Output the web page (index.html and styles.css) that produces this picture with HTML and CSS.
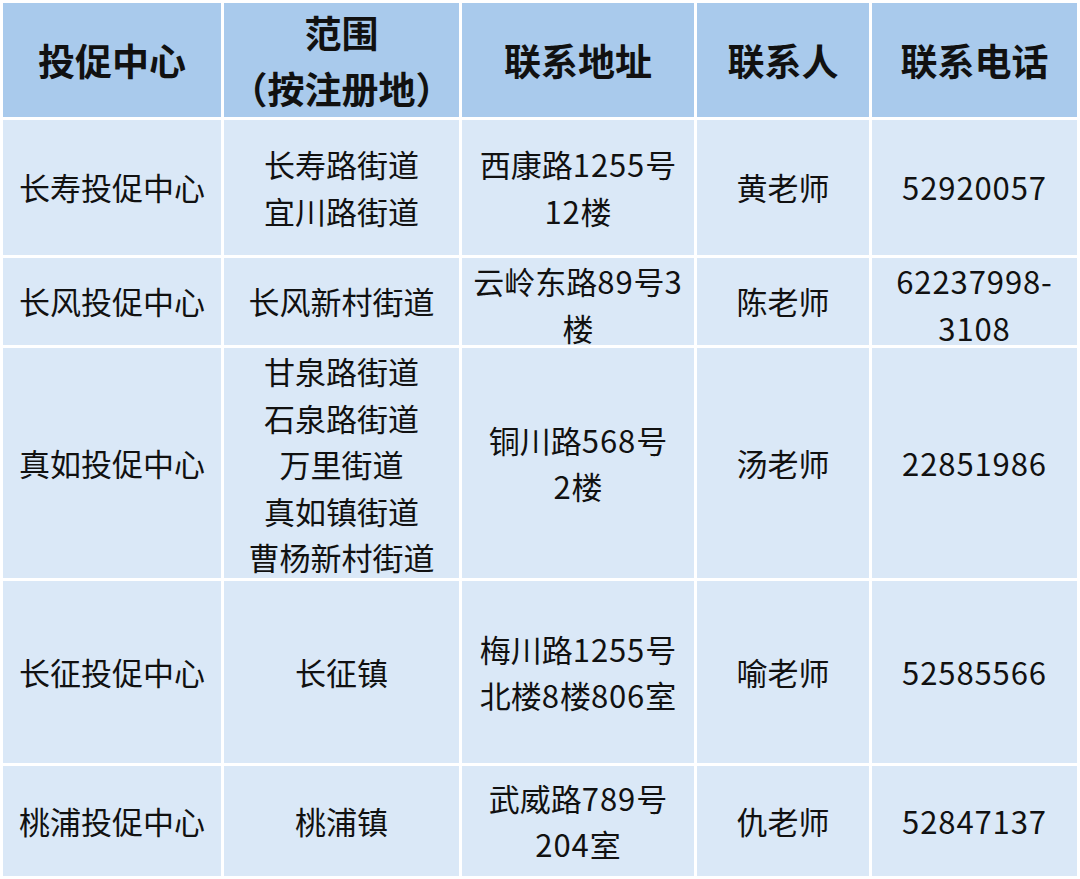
FILE: index.html
```html
<!DOCTYPE html>
<html lang="zh-CN">
<head>
<meta charset="utf-8">
<title>投促中心联系表</title>
<link rel="stylesheet" href="styles.css">
</head>
<body>
<div class="table">
  <div class="cell head"><div class="txt">投促中心</div></div>
  <div class="cell head"><div class="txt">范围<br>（按注册地）</div></div>
  <div class="cell head"><div class="txt">联系地址</div></div>
  <div class="cell head"><div class="txt">联系人</div></div>
  <div class="cell head"><div class="txt">联系电话</div></div>

  <div class="cell"><div class="txt">长寿投促中心</div></div>
  <div class="cell"><div class="txt">长寿路街道<br>宜川路街道</div></div>
  <div class="cell"><div class="txt">西康路<span class="num">1255</span>号<br><span class="num">12</span>楼</div></div>
  <div class="cell"><div class="txt">黄老师</div></div>
  <div class="cell"><div class="txt"><span class="num">52920057</span></div></div>

  <div class="cell"><div class="txt">长风投促中心</div></div>
  <div class="cell"><div class="txt">长风新村街道</div></div>
  <div class="cell"><div class="txt">云岭东路<span class="num">89</span>号<span class="num">3</span><br>楼</div></div>
  <div class="cell"><div class="txt">陈老师</div></div>
  <div class="cell"><div class="txt"><span class="num">62237998-</span><br><span class="num">3108</span></div></div>

  <div class="cell"><div class="txt">真如投促中心</div></div>
  <div class="cell"><div class="txt">甘泉路街道<br>石泉路街道<br>万里街道<br>真如镇街道<br>曹杨新村街道</div></div>
  <div class="cell"><div class="txt">铜川路<span class="num">568</span>号<br><span class="num">2</span>楼</div></div>
  <div class="cell"><div class="txt">汤老师</div></div>
  <div class="cell"><div class="txt"><span class="num">22851986</span></div></div>

  <div class="cell"><div class="txt">长征投促中心</div></div>
  <div class="cell"><div class="txt">长征镇</div></div>
  <div class="cell"><div class="txt">梅川路<span class="num">1255</span>号<br>北楼<span class="num">8</span>楼<span class="num">806</span>室</div></div>
  <div class="cell"><div class="txt">喻老师</div></div>
  <div class="cell"><div class="txt"><span class="num">52585566</span></div></div>

  <div class="cell"><div class="txt">桃浦投促中心</div></div>
  <div class="cell"><div class="txt">桃浦镇</div></div>
  <div class="cell"><div class="txt">武威路<span class="num">789</span>号<br><span class="num">204</span>室</div></div>
  <div class="cell"><div class="txt">仇老师</div></div>
  <div class="cell"><div class="txt"><span class="num">52847137</span></div></div>
</div>
</body>
</html>
```

FILE: styles.css
```css
html, body {
  margin: 0;
  padding: 0;
  background: #ffffff;
}

.table {
  width: 1080px;
  height: 879px;
  box-sizing: border-box;
  padding: 3px;
  display: grid;
  grid-template-columns: 218px 235px 232px 172px 205px;
  grid-template-rows: 114px 135px 87px 230px 182px 110px;
  gap: 3px;
  background: #ffffff;
  font-family: "Noto Sans CJK SC", "Noto Sans", sans-serif;
  color: #111111;
}

.cell {
  background: #dae8f7;
  display: flex;
  align-items: safe center;
  justify-content: center;
  min-height: 0;
  font-size: 31px;
  line-height: 46.5px;
}

.txt {
  text-align: center;
  white-space: nowrap;
}

.num {
  letter-spacing: 0.9px;
}

.head {
  background: #a9caec;
  font-size: 37px;
  line-height: 56px;
  font-weight: 700;
}
```
